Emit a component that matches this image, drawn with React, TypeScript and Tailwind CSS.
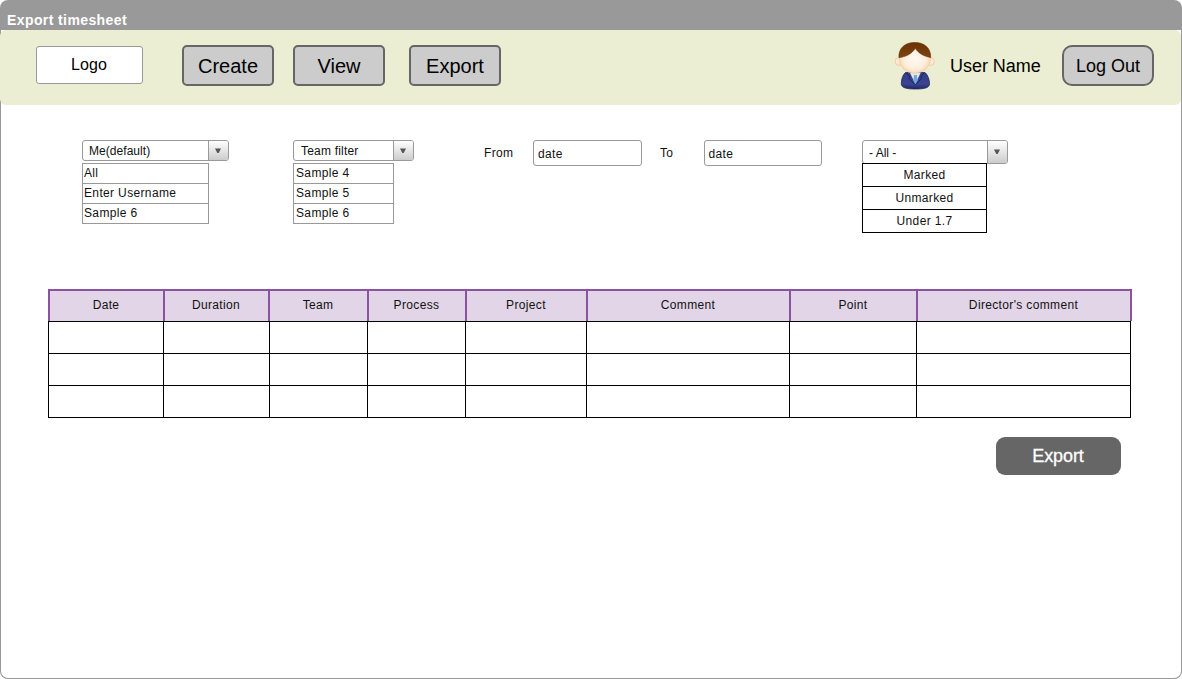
import React from "react";

function NavButton({ label, className }: { label: string; className: string }) {
  return (
    <button
      className={`h-[41px] w-[92px] border-2 border-[#666] bg-[#ccc] pt-px text-center text-black ${className}`}
    >
      {label}
    </button>
  );
}

function Avatar() {
  return (
    <svg width="42" height="49" viewBox="0 0 42 49">
      <defs>
        <radialGradient id="face" cx="0.5" cy="0.5" r="0.55">
          <stop offset="0" stopColor="#fffaf3" />
          <stop offset="0.65" stopColor="#fdeedd" />
          <stop offset="1" stopColor="#f6cfa6" />
        </radialGradient>
        <linearGradient id="hair" x1="0" y1="0" x2="0" y2="1">
          <stop offset="0" stopColor="#6b3305" />
          <stop offset="1" stopColor="#7d430f" />
        </linearGradient>
        <linearGradient id="suit" x1="0" y1="0" x2="0" y2="1">
          <stop offset="0" stopColor="#343f85" />
          <stop offset="0.7" stopColor="#3c4394" />
          <stop offset="1" stopColor="#1e2765" />
        </linearGradient>
      </defs>
      <circle cx="5" cy="19.500" r="3.900" fill="#fde9d3" stroke="#f3c397" strokeWidth="0.8" />
      <circle cx="36.500" cy="19.500" r="3.900" fill="#fde9d3" stroke="#f3c397" strokeWidth="0.8" />
      <path
        d="M11.500 30.500 C8.500 33 7.300 38 7.300 42 C7.500 46.300 14 47 21.500 47 C29 47 35.300 46.300 35.500 42 C35.500 38 34 33 31 30.500 Z"
        fill="url(#suit)"
        stroke="#202760"
        strokeWidth="0.8"
      />
      <path d="M16 31 L21.400 42 L26.500 31 Z" fill="#e4e6ee" />
      <path d="M20 33 L22.800 33 L23.600 38.500 L21.400 42 L19.400 38.500 Z" fill="#6caade" />
      <path d="M12.500 31 L15.500 34.500 L15 36.500 L20.800 42.500 M30 31 L27 34.500 L27.500 36.500 L22 42.500" fill="none" stroke="#181f55" strokeWidth="0.9" />
      <ellipse cx="20.800" cy="16.500" rx="15.700" ry="14.800" fill="url(#face)" stroke="#f1c498" strokeWidth="0.6" />
      <path
        d="M4.900 15.500 C4.500 6 11 0.500 20.800 0.500 C30.500 0.500 37 6 36.700 15.500 C30.500 14.500 24.500 11.500 21.200 6.300 C18 12 11.500 15 4.900 15.500 Z"
        fill="url(#hair)"
        stroke="#5e2c04"
        strokeWidth="0.6"
      />
    </svg>
  );
}

function Select({ label, className }: { label: string; className: string }) {
  return (
    <div className={`flex overflow-hidden rounded-[3px] border border-[#999] bg-white ${className}`}>
      <div className="flex flex-1 items-center pl-1.5">{label}</div>
      <div className="flex w-5 items-center justify-center border-l border-[#999] bg-linear-to-b from-white to-[#ccc]">
        <svg width="7" height="6" viewBox="0 0 7 6">
          <path d="M0 0.500H6L3.700 5H2.300Z" fill="#555" />
        </svg>
      </div>
    </div>
  );
}

function OptionList({ items, className }: { items: string[]; className: string }) {
  return (
    <ul className={`mt-0.5 border-t border-[#999] ${className}`}>
      {items.map((item) => (
        <li key={item} className="flex h-5 items-center border-x border-b border-[#999] bg-white pb-0.5">
          {item}
        </li>
      ))}
    </ul>
  );
}

const columns = ["Date", "Duration", "Team", "Process", "Project", "Comment", "Point", "Director's comment"];

export default function App() {
  return (
    <div className="h-[679px] w-[1182px] overflow-hidden rounded-[8px] bg-[#999] font-['Liberation_Sans',Arial,sans-serif] text-[12px] leading-[14px] tracking-[0.35px] text-[#111]">
      <div className="h-[30px] pt-[12px] pl-[7px] text-[14px] leading-4 font-bold tracking-[0.4px] text-white">
        Export timesheet
      </div>
      <div className="h-[649px] rounded-b-[8px] border-x border-b border-[#999] bg-white">
        <header className="-ml-px flex h-[75px] items-start rounded-[6px] bg-[#ebeed2] pt-[15px] pl-9">
          <div className="mt-px flex h-[38px] w-[107px] items-center justify-center rounded-[3px] border border-[#999] bg-white pr-px text-[16px] tracking-[0.1px] text-black">
            Logo
          </div>
          <nav className="ml-[39px] flex text-[20px] tracking-[0px]">
            <NavButton label="Create" className="rounded-[5px]" />
            <NavButton label="View" className="ml-[19px] rounded-[5px]" />
            <NavButton label="Export" className="ml-6 rounded-[5px]" />
          </nav>
          <div className="-mt-[3px] ml-[393px]">
            <Avatar />
          </div>
          <div className="mt-[10px] ml-[14px] w-[112px] text-[18px] leading-[22px] tracking-[-0.03px] text-black">
            User Name
          </div>
          <NavButton label="Log Out" className="rounded-[10px] text-[18px] tracking-[0px]" />
        </header>

        <section className="flex h-[184px] pt-[35px] pl-[81px]">
          <div className="w-[211px]">
            <Select label="Me(default)" className="h-[21px] w-[147px] tracking-[0.05px]" />
            <OptionList items={["All", "Enter Username", "Sample 6"]} className="w-[127px] [&>li]:pl-px" />
          </div>
          <div className="w-[191px]">
            <Select label="Team filter" className="h-[21px] w-[121px] tracking-[0.2px] [&>div:first-child]:pl-[7px]" />
            <OptionList items={["Sample 4", "Sample 5", "Sample 6"]} className="w-[101px] [&>li]:pl-0.5" />
          </div>
          <div className="w-[49px] pt-1.5">From</div>
          <div className="flex h-[26px] w-[109px] items-center rounded-[3px] border border-[#999] pt-px pl-1">date</div>
          <div className="w-[62px] pt-1.5 pl-[18px]">To</div>
          <div className="flex h-[26px] w-[118px] items-center rounded-[3px] border border-[#999] pt-px pl-[3.500px]">
            date
          </div>
          <div className="ml-10">
            <Select label="- All -" className="h-6 w-[146px] tracking-[0px] [&>div:first-child]:pt-px" />
            <ul className="relative -mt-px w-[125px] border-t border-black">
              {["Marked", "Unmarked", "Under 1.7"].map((item) => (
                <li
                  key={item}
                  className="flex h-[23px] items-center justify-center border-x border-b border-black bg-white"
                >
                  {item}
                </li>
              ))}
            </ul>
          </div>
        </section>

        <section className="ml-[47px] w-[1084px]">
          <div className="grid h-8 grid-cols-[115px_105px_99px_98px_121px_203px_127px_216px] border-t-2 border-[#8b52a1] bg-[#e1d5e7] text-center">
            {columns.map((name) => (
              <div key={name} className="border-l-2 border-[#8b52a1] pt-[7px] pr-px last:border-r-2">
                {name}
              </div>
            ))}
          </div>
          <div className="w-[1083px] border-t border-black">
            {[0, 1, 2].map((row) => (
              <div
                key={row}
                className="grid h-8 grid-cols-[115px_106px_98px_98px_121px_203px_127px_215px] border-b border-black"
              >
                {columns.map((name) => (
                  <div key={name} className="border-l border-black last:border-r" />
                ))}
              </div>
            ))}
          </div>
        </section>
        <button className="mt-[19px] ml-[995px] block h-[38px] w-[125px] rounded-[9px] bg-[#666] pr-px text-[18px] tracking-[-0.1px] text-white [-webkit-text-stroke:0.3px_white]">
          Export
        </button>
      </div>
    </div>
  );
}
